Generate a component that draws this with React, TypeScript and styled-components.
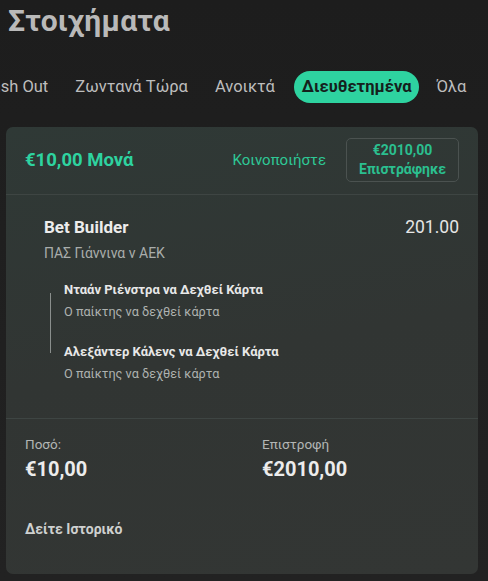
import React from "react";
import styled, { createGlobalStyle } from "styled-components";

const Global = createGlobalStyle`
  html, body { margin: 0; padding: 0; background: #1f1f1f; }
  body { font-family: Roboto, "Noto Sans", "Liberation Sans", sans-serif; width: 488px; height: 581px; overflow: hidden; }
`;

const Page = styled.div`
  width: 488px;
  height: 581px;
  background: linear-gradient(180deg, #1d1d1d 0%, #222 100%);
  display: flex;
  flex-direction: column;
  overflow: hidden;
`;

const Title = styled.h1`
  margin: 0;
  padding: 3px 0 0 8px;
  height: 37px;
  font-size: 30px;
  line-height: 36px;
  font-weight: 700;
  color: #b9b9b9;
  letter-spacing: 0.2px;
`;

const Tabs = styled.div`
  display: flex;
  align-items: center;
  height: 34px;
  margin-top: 30px;
  margin-left: -27px;
  white-space: nowrap;
`;

const Tab = styled.div<{ $active?: boolean }>`
  font-size: 16.5px;
  line-height: 20px;
  padding: 6px 8px;
  border-radius: 16px;
  margin-right: ${(p) => (p.$active ? "9px" : "11px")};
  color: ${(p) => (p.$active ? "#15201c" : "#bdbdbd")};
  background: ${(p) => (p.$active ? "#2ed3a0" : "transparent")};
  font-weight: ${(p) => (p.$active ? 700 : 400)};
`;

const Card = styled.div`
  margin: 23px 10px 0 6px;
  height: 447px;
  border-radius: 7px;
  background: linear-gradient(170deg, #2f3936 0%, #313533 50%, #333634 100%);
  display: flex;
  flex-direction: column;
`;

const Header = styled.div`
  display: flex;
  align-items: center;
  height: 65px;
  padding: 0 19px 2px 19px;
  border-bottom: 1px solid #3e4543;
`;

const Single = styled.div`
  flex: 1;
  font-size: 18.5px;
  font-weight: 700;
  color: #2ed3a0;
`;

const Share = styled.div`
  font-size: 15px;
  color: #2ec896;
  margin-right: 20px;
`;

const Returned = styled.div`
  width: 111px;
  height: 42px;
  border: 1px solid #4b5250;
  border-radius: 5px;
  display: flex;
  flex-direction: column;
  align-items: center;
  justify-content: center;
  color: #2bbf8f;
  font-size: 14px;
  font-weight: 700;
  line-height: 19px;
`;

const Body = styled.div`
  padding: 22px 19px 0 38px;
  height: 201px;
  border-bottom: 1px solid #3e4543;
`;

const BetRow = styled.div`
  display: flex;
  justify-content: space-between;
  align-items: baseline;
`;

const BetName = styled.div`
  font-size: 17px;
  font-weight: 700;
  color: #ececec;
`;

const Odds = styled.div`
  font-size: 17.5px;
  color: #e6e6e6;
`;

const Match = styled.div`
  margin-top: 8px;
  font-size: 14px;
  color: #a9adab;
`;

const Legs = styled.div`
  margin-top: 21px;
  margin-left: 6px;
  padding-left: 14px;
  position: relative;
  display: flex;
  flex-direction: column;
  gap: 24px;
  &::before {
    content: "";
    position: absolute;
    left: 0;
    top: 11px;
    height: 60px;
    width: 1px;
    background: #8a8f8d;
  }
`;

const Leg = styled.div`
  display: flex;
  flex-direction: column;
  gap: 6px;
`;

const LegTitle = styled.div`
  font-size: 13px;
  line-height: 16px;
  font-weight: 700;
  color: #e8e8e8;
`;

const LegSub = styled.div`
  font-size: 12.7px;
  line-height: 16px;
  color: #aeb2b0;
`;

const Totals = styled.div`
  display: grid;
  grid-template-columns: 237px 1fr;
  padding: 17px 19px 0 19px;
`;

const Total = styled.div`
  display: flex;
  flex-direction: column;
  gap: 5px;
`;

const Label = styled.div`
  font-size: 13.5px;
  color: #b3b6b5;
`;

const Amount = styled.div`
  font-size: 20px;
  font-weight: 700;
  color: #ececec;
`;

const History = styled.div`
  padding: 40px 19px 0;
  font-size: 14px;
  font-weight: 700;
  color: #cfd1d0;
`;

export default function App() {
  return (
    <>
      <Global />
      <Page>
        <Title>Στοιχήματα</Title>
        <Tabs>
          <Tab>Cash Out</Tab>
          <Tab>Ζωντανά Τώρα</Tab>
          <Tab>Ανοικτά</Tab>
          <Tab $active>Διευθετημένα</Tab>
          <Tab>Όλα</Tab>
        </Tabs>
        <Card>
          <Header>
            <Single>€10,00 Μονά</Single>
            <Share>Κοινοποιήστε</Share>
            <Returned>
              <span>€2010,00</span>
              <span>Επιστράφηκε</span>
            </Returned>
          </Header>
          <Body>
            <BetRow>
              <BetName>Bet Builder</BetName>
              <Odds>201.00</Odds>
            </BetRow>
            <Match>ΠΑΣ Γιάννινα ν ΑΕΚ</Match>
            <Legs>
              <Leg>
                <LegTitle>Νταάν Ριένστρα να Δεχθεί Κάρτα</LegTitle>
                <LegSub>Ο παίκτης να δεχθεί κάρτα</LegSub>
              </Leg>
              <Leg>
                <LegTitle>Αλεξάντερ Κάλενς να Δεχθεί Κάρτα</LegTitle>
                <LegSub>Ο παίκτης να δεχθεί κάρτα</LegSub>
              </Leg>
            </Legs>
          </Body>
          <Totals>
            <Total>
              <Label>Ποσό:</Label>
              <Amount>€10,00</Amount>
            </Total>
            <Total>
              <Label>Επιστροφή</Label>
              <Amount>€2010,00</Amount>
            </Total>
          </Totals>
          <History>Δείτε Ιστορικό</History>
        </Card>
      </Page>
    </>
  );
}
